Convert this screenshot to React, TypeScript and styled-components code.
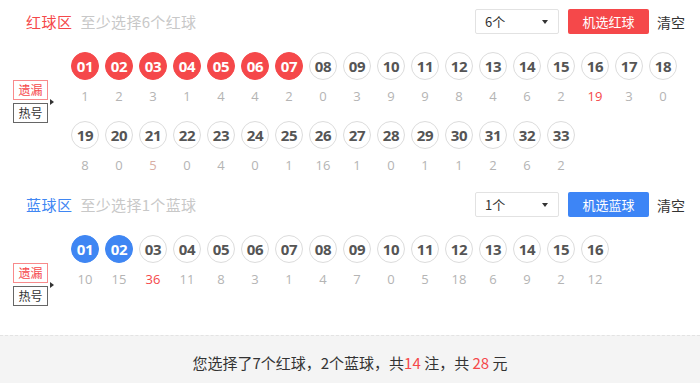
import { createGlobalStyle, styled } from 'styled-components';

const RED = '#f5484a';
const BLUE = '#3f86f3';

const GlobalStyle = createGlobalStyle`
  html, body {
    margin: 0;
    padding: 0;
    background: #fff;
  }
  body {
    font-family: 'Open Sans', 'Noto Sans CJK SC', sans-serif;
    color: #333;
  }
`;

type Tone = 'normal' | 'warm' | 'hot';

interface BallData {
  num: string;
  miss: number;
  picked?: boolean;
  tone?: Tone;
}

const redMiss = [1, 2, 3, 1, 4, 4, 2, 0, 3, 9, 9, 8, 4, 6, 2, 19, 3, 0, 8, 0, 5, 0, 4, 0, 1, 16, 1, 0, 1, 1, 2, 6, 2];
const blueMiss = [10, 15, 36, 11, 8, 3, 1, 4, 7, 0, 5, 18, 6, 9, 2, 12];

const pad = (n: number) => (n < 10 ? `0${n}` : `${n}`);

const redBalls: BallData[] = redMiss.map((miss, i) => ({
  num: pad(i + 1),
  miss,
  picked: i < 7,
  tone: i === 15 ? 'hot' : i === 20 ? 'warm' : 'normal',
}));

const blueBalls: BallData[] = blueMiss.map((miss, i) => ({
  num: pad(i + 1),
  miss,
  picked: i < 2,
  tone: i === 2 ? 'hot' : 'normal',
}));

interface ZoneProps {
  kind: 'red' | 'blue';
  title: string;
  hint: string;
  count: string;
  action: string;
  balls: BallData[];
}

const Zone = ({ kind, title, hint, count, action, balls }: ZoneProps) => {
  const color = kind === 'red' ? RED : BLUE;
  return (
    <StZone>
      <StHeader>
        <StTitle $color={color}>{title}</StTitle>
        <StHint>{hint}</StHint>
        <StTools>
          <StSelect>
            <span>{count}</span>
            <StCaret />
          </StSelect>
          <StAction $color={kind === 'red' ? RED : '#3d85f6'}>{action}</StAction>
          <StClear>清空</StClear>
        </StTools>
      </StHeader>
      <StBody>
        <StTabs>
          <StTab $active>遗漏</StTab>
          <StArrow />
          <StTab>热号</StTab>
        </StTabs>
        <StGrid>
          {balls.map((b) => (
            <StCell key={b.num}>
              <StBall $picked={!!b.picked} $color={color}>
                {b.num}
              </StBall>
              <StMiss $tone={b.tone || 'normal'}>{b.miss}</StMiss>
            </StCell>
          ))}
        </StGrid>
      </StBody>
    </StZone>
  );
};

const App = () => {
  return (
    <>
      <GlobalStyle />
      <StPage>
        <Zone kind="red" title="红球区" hint="至少选择6个红球" count="6个" action="机选红球" balls={redBalls} />
        <Zone kind="blue" title="蓝球区" hint="至少选择1个蓝球" count="1个" action="机选蓝球" balls={blueBalls} />
        <StFooter>
          您选择了7个红球，2个蓝球，共<StRed>14</StRed> 注，共 <StRed>28</StRed> 元
        </StFooter>
      </StPage>
    </>
  );
};

const StPage = styled.div`
  width: 700px;
  height: 383px;
  padding-top: 9px;
  box-sizing: border-box;
  display: flex;
  flex-direction: column;
  overflow: hidden;
`;

const StZone = styled.div`
  display: flex;
  flex-direction: column;
  & + & {
    margin-top: 2px;
  }
`;

const StHeader = styled.div`
  height: 25px;
  display: flex;
  align-items: center;
  padding: 0 15px 0 26px;
  font-family: 'Noto Sans CJK SC', sans-serif;
`;

const StTitle = styled.div<{ $color: string }>`
  font-size: 15px;
  letter-spacing: 0.5px;
  color: ${({ $color }) => $color};
`;

const StHint = styled.div`
  margin-left: 8px;
  font-size: 15px;
  letter-spacing: 0.3px;
  color: #c8c8c8;
`;

const StTools = styled.div`
  margin-left: auto;
  display: flex;
  align-items: center;
`;

const StSelect = styled.div`
  width: 84px;
  height: 25px;
  box-sizing: border-box;
  border: 1px solid #e2e2e2;
  border-radius: 2px;
  display: flex;
  align-items: center;
  justify-content: space-between;
  padding: 0 10px 0 9px;
  font-size: 13px;
  color: #333;
`;

const StCaret = styled.span`
  width: 0;
  height: 0;
  border-left: 3.5px solid transparent;
  border-right: 3.5px solid transparent;
  border-top: 4px solid #333;
`;

const StAction = styled.div<{ $color: string }>`
  margin-left: 9px;
  width: 81px;
  height: 25px;
  border-radius: 2px;
  background: ${({ $color }) => $color};
  color: #fff;
  font-size: 13px;
  display: flex;
  align-items: center;
  justify-content: center;
`;

const StClear = styled.div`
  margin-left: 8px;
  font-size: 14px;
  color: #333;
`;

const StBody = styled.div`
  display: flex;
  margin-top: 18px;
`;

const StTabs = styled.div`
  width: 68px;
  box-sizing: border-box;
  padding: 28px 0 0 13px;
  position: relative;
  display: flex;
  flex-direction: column;
  gap: 3px;
`;

const StTab = styled.div<{ $active?: boolean }>`
  width: 35px;
  height: 20px;
  box-sizing: border-box;
  border: 1px solid ${({ $active }) => ($active ? '#f88a8b' : '#666')};
  font-size: 12px;
  line-height: 18px;
  text-align: center;
  color: ${({ $active }) => ($active ? RED : '#333')};
  font-family: 'Noto Sans CJK SC', sans-serif;
`;

const StArrow = styled.span`
  position: absolute;
  left: 50px;
  top: 47px;
  width: 0;
  height: 0;
  border-top: 3px solid transparent;
  border-bottom: 3px solid transparent;
  border-left: 4px solid #333;
`;

const StGrid = styled.div`
  display: grid;
  grid-template-columns: repeat(18, 34px);
`;

const StCell = styled.div`
  height: 69px;
  display: flex;
  flex-direction: column;
  align-items: center;
`;

const StBall = styled.div<{ $picked: boolean; $color: string }>`
  width: 28px;
  height: 28px;
  box-sizing: border-box;
  border-radius: 50%;
  border: 1px solid ${({ $picked, $color }) => ($picked ? $color : '#dcdcdc')};
  background: ${({ $picked, $color }) => ($picked ? $color : '#fff')};
  color: ${({ $picked }) => ($picked ? '#fff' : '#555')};
  font-size: 15px;
  font-weight: 700;
  letter-spacing: -0.3px;
  display: flex;
  align-items: center;
  justify-content: center;
`;

const StMiss = styled.div<{ $tone: Tone }>`
  margin-top: 8px;
  line-height: 16px;
  font-size: 13px;
  color: ${({ $tone }) => ($tone === 'hot' ? RED : $tone === 'warm' ? '#d9aea4' : '#b4b4b4')};
`;

const StFooter = styled.div`
  margin-top: auto;
  height: 48px;
  box-sizing: border-box;
  padding-top: 5px;
  border-top: 1px dashed #e3e3e3;
  background: #f4f4f4;
  display: flex;
  align-items: center;
  justify-content: center;
  font-size: 15px;
  color: #333;
  font-family: 'Noto Sans CJK SC', sans-serif;
  white-space: pre;
`;

const StRed = styled.span`
  color: ${RED};
`;

export default App;
